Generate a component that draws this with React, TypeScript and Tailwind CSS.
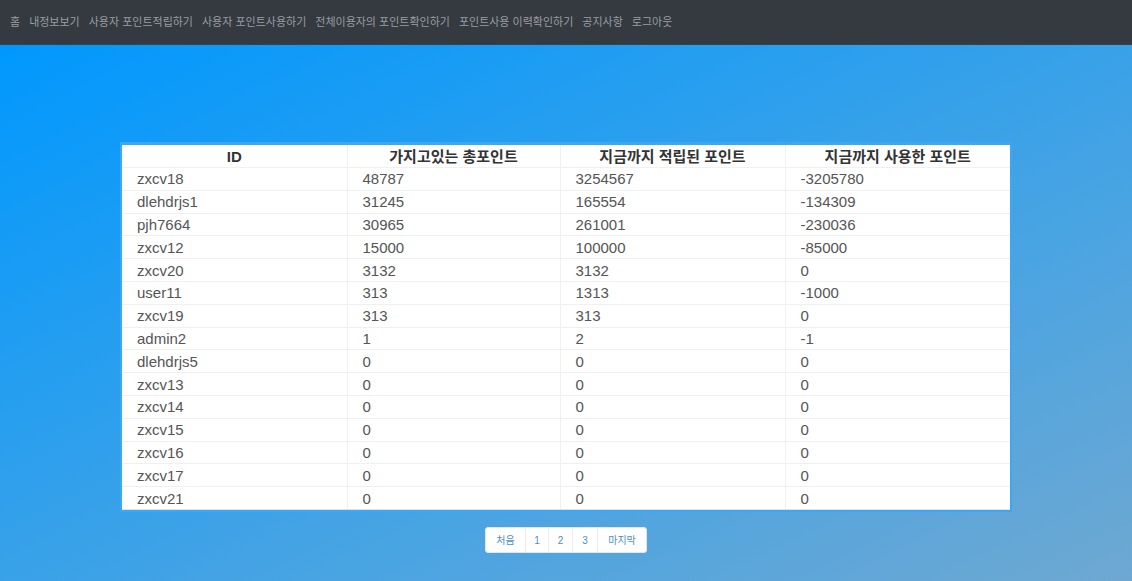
import React from "react";

const rows: [string, string, string, string][] = [
  ["zxcv18", "48787", "3254567", "-3205780"],
  ["dlehdrjs1", "31245", "165554", "-134309"],
  ["pjh7664", "30965", "261001", "-230036"],
  ["zxcv12", "15000", "100000", "-85000"],
  ["zxcv20", "3132", "3132", "0"],
  ["user11", "313", "1313", "-1000"],
  ["zxcv19", "313", "313", "0"],
  ["admin2", "1", "2", "-1"],
  ["dlehdrjs5", "0", "0", "0"],
  ["zxcv13", "0", "0", "0"],
  ["zxcv14", "0", "0", "0"],
  ["zxcv15", "0", "0", "0"],
  ["zxcv16", "0", "0", "0"],
  ["zxcv17", "0", "0", "0"],
  ["zxcv21", "0", "0", "0"],
];

const navItems = [
  "홈",
  "내정보보기",
  "사용자 포인트적립하기",
  "사용자 포인트사용하기",
  "전체이용자의 포인트확인하기",
  "포인트사용 이력확인하기",
  "공지사항",
  "로그아웃",
];

const font = "font-['Liberation_Sans','Noto_Sans_CJK_KR',sans-serif]";

export default function App() {
  return (
    <div className={`w-[1132px] h-[581px] flex flex-col overflow-hidden ${font}`}>
      <nav className="h-[45px] shrink-0 bg-[#343a40] border-b border-[#3b4147] flex items-center px-[10px] gap-[9px] text-[11px] text-[#9a9da1] pt-[1px]">
        {navItems.map((n) => (
          <span key={n} className="whitespace-nowrap">{n}</span>
        ))}
      </nav>
      <main className="flex-1 flex flex-col items-center bg-[linear-gradient(to_bottom_right,#0098fe,#4aa4e2_65%,#6ea8d2)] pt-[97px]">
        <div className="w-[892px] border-2 border-t-[3px] border-[#3aa8f2] bg-white">
          <table className="w-full border-collapse table-fixed">
            <colgroup>
              <col className="w-[225px]" />
              <col className="w-[213px]" />
              <col className="w-[225px]" />
              <col className="w-[225px]" />
            </colgroup>
            <thead>
              <tr className="h-[22.5px] border-b border-[#f0f0f0]">
                {["ID", "가지고있는 총포인트", "지금까지 적립된 포인트", "지금까지 사용한 포인트"].map((h, i) => (
                  <th
                    key={h}
                    className={`text-center font-bold text-[15px] text-[#333] p-0 leading-[21px] ${i > 0 ? "border-l border-[#f0f0f0]" : ""}`}
                  >
                    {h}
                  </th>
                ))}
              </tr>
            </thead>
            <tbody>
              {rows.map((r, ri) => (
                <tr key={r[0]} className={`h-[22.8px] ${ri < rows.length - 1 ? "border-b border-[#f0f0f0]" : ""}`}>
                  {r.map((c, i) => (
                    <td
                      key={i}
                      className={`pl-[15px] py-0 text-[15px] text-[#555] leading-[21px] ${i > 0 ? "border-l border-[#f0f0f0]" : ""}`}
                    >
                      {c}
                    </td>
                  ))}
                </tr>
              ))}
            </tbody>
          </table>
          <div className="h-[1px] bg-[#dfe3e8]" />
        </div>
        <div className="mt-[15px] flex bg-white rounded-[3px] border border-[#e6e6e6] text-[10px] text-[#4d8fc9] h-[26px] items-stretch">
          <span className="w-[39px] flex items-center justify-center">처음</span>
          <span className="w-[23px] flex items-center justify-center border-l border-[#ececec]">1</span>
          <span className="w-[24px] flex items-center justify-center border-l border-[#ececec]">2</span>
          <span className="w-[25px] flex items-center justify-center border-l border-[#ececec]">3</span>
          <span className="w-[49px] flex items-center justify-center border-l border-[#ececec]">마지막</span>
        </div>
      </main>
    </div>
  );
}
